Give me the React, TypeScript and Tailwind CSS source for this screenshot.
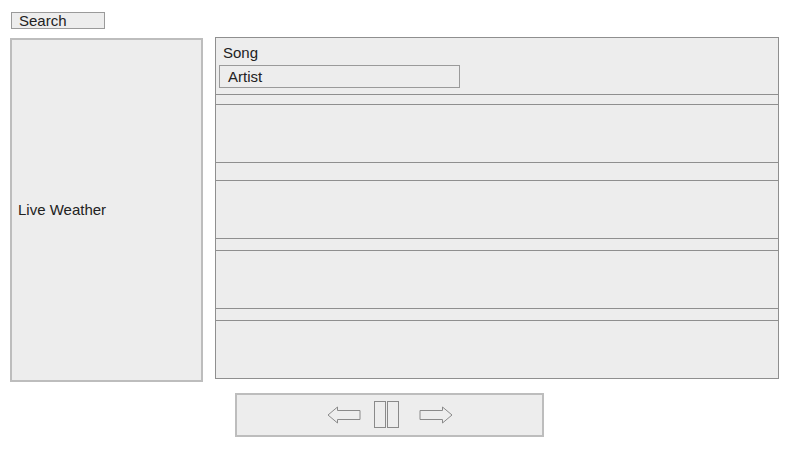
import React from "react"

function LeftArrow() {
    return (
        <svg width="34" height="18" viewBox="0 0 34 18" className="block">
            <path d="M1 9 L10.5 1 L10.5 4.5 L33 4.5 L33 13.5 L10.5 13.5 L10.5 17 Z" fill="none" stroke="#8a8a8a" strokeWidth="1" />
        </svg>
    )
}

function RightArrow() {
    return (
        <svg width="34" height="18" viewBox="0 0 34 18" className="block">
            <path d="M33 9 L23.5 1 L23.5 4.5 L1 4.5 L1 13.5 L23.5 13.5 L23.5 17 Z" fill="none" stroke="#8a8a8a" strokeWidth="1" />
        </svg>
    )
}

function Pause() {
    return (
        <svg width="26" height="28" viewBox="0 0 26 28" className="block">
            <rect x="0.5" y="0.5" width="11" height="26" fill="none" stroke="#8a8a8a" />
            <rect x="13.5" y="0.5" width="11" height="26" fill="none" stroke="#8a8a8a" />
        </svg>
    )
}

const rows = [
    { gap: "h-[10px]", row: "h-[58px] border-b" },
    { gap: "h-[18px]", row: "h-[58px] border-b" },
    { gap: "h-[12px]", row: "h-[58px] border-b" },
    { gap: "h-[12px]", row: "h-[57px]" },
]

export default function App() {
    return (
        <div className="w-[798px] h-[457px] bg-white text-[15px] text-[#222] font-['Liberation_Sans',Arial,sans-serif] pt-[12px] overflow-hidden">
            <div className="ml-[11px] w-[94px] h-[17px] border border-[#9a9a9a] bg-[#ededed] pl-[7px] leading-[15px]">
                Search
            </div>

            <div className="flex items-start mt-[8px]">
                <div className="ml-[10px] mt-px w-[193px] h-[344px] border-2 border-[#bdbdbd] bg-[#ededed] flex items-center pl-[6px]">
                    Live Weather
                </div>

                <div className="ml-[12px] w-[564px] border border-[#8f8f8f] bg-[#ededed] flex flex-col">
                    <div className="h-[57px] border-b border-[#8f8f8f] pl-[3px] pt-[6px]">
                        <div className="pl-[4px] leading-[17px]">Song</div>
                        <div className="mt-[4px] w-[241px] h-[23px] border border-[#9a9a9a] pl-[8px] leading-[21px]">
                            Artist
                        </div>
                    </div>
                    {rows.map((r, i) => (
                        <React.Fragment key={i}>
                            <div className={`${r.gap} border-b border-[#8f8f8f]`} />
                            <div className={`${r.row} border-[#8f8f8f]`} />
                        </React.Fragment>
                    ))}
                </div>
            </div>

            <div className="ml-[235px] mt-[11px] w-[309px] h-[44px] border-2 border-[#bdbdbd] bg-[#ededed] flex items-center justify-center">
                <LeftArrow />
                <div className="ml-[13px] mr-[19px]">
                    <Pause />
                </div>
                <RightArrow />
            </div>
        </div>
    )
}
